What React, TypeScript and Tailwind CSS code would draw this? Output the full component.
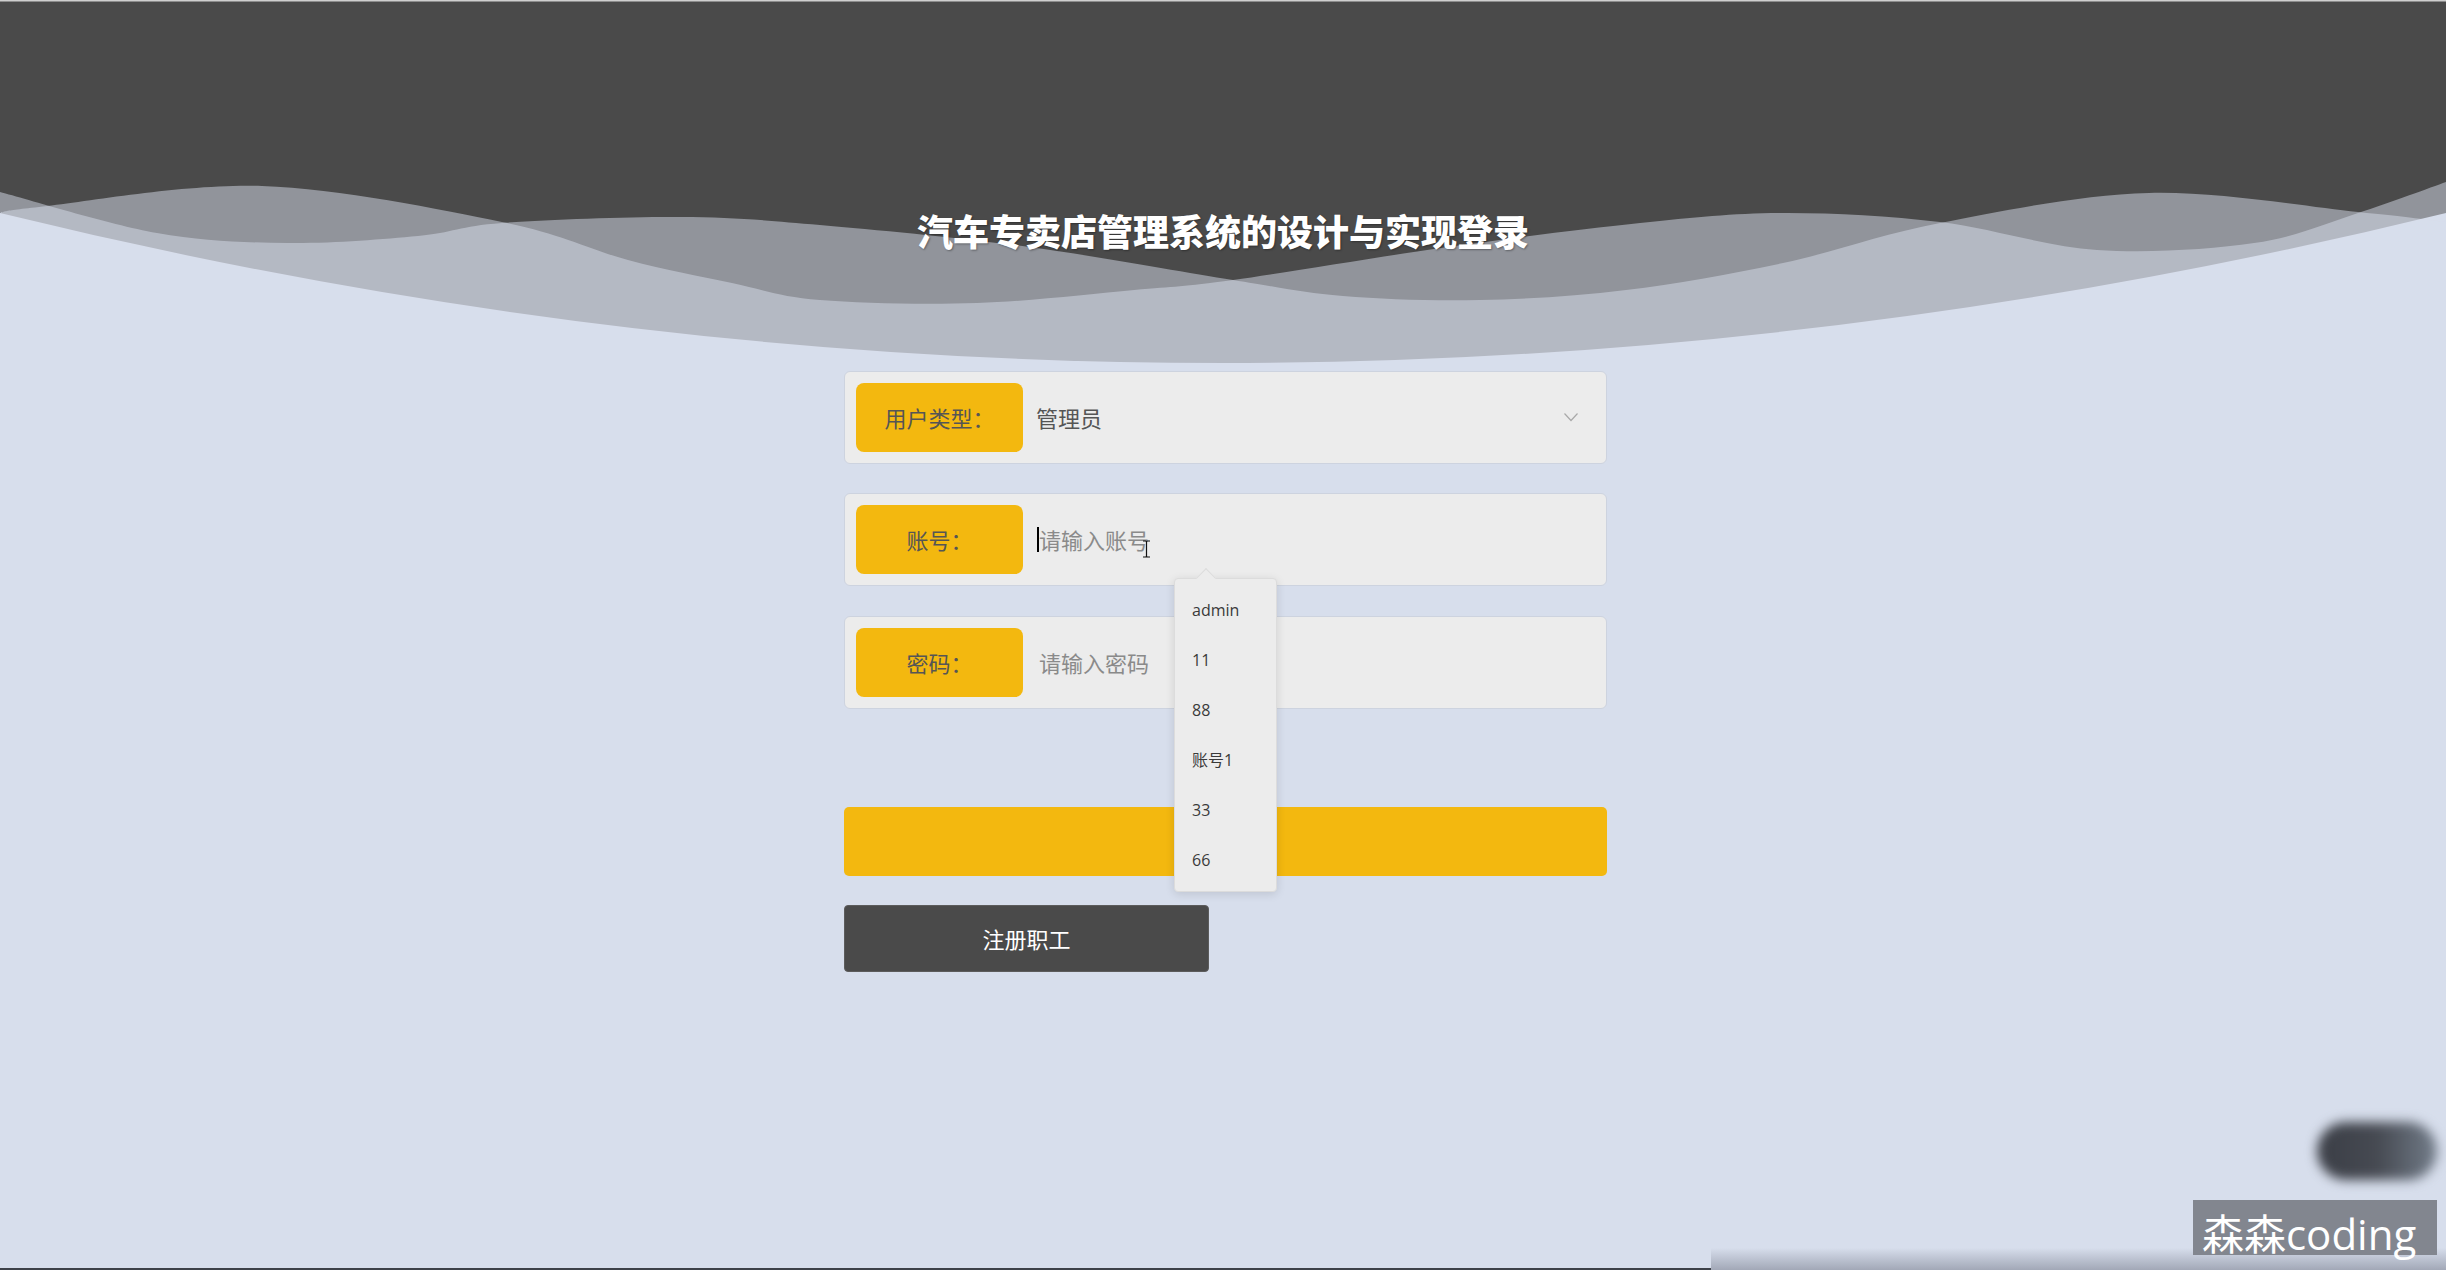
import React from "react";

type P = [number, number];

function smooth(pts: P[]): string {
  let d = `M${pts[0][0]},${pts[0][1]}`;
  for (let i = 0; i < pts.length - 1; i++) {
    const p0 = pts[i - 1] || pts[i];
    const p1 = pts[i];
    const p2 = pts[i + 1];
    const p3 = pts[i + 2] || p2;
    const c1x = p1[0] + (p2[0] - p0[0]) / 6;
    const c1y = p1[1] + (p2[1] - p0[1]) / 6;
    const c2x = p2[0] - (p3[0] - p1[0]) / 6;
    const c2y = p2[1] - (p3[1] - p1[1]) / 6;
    d += ` C${c1x.toFixed(1)},${c1y.toFixed(1)} ${c2x.toFixed(1)},${c2y.toFixed(1)} ${p2[0]},${p2[1]}`;
  }
  return d;
}

const waveX: P[] = [
  [0, 192], [157, 233], [288, 243], [418, 236], [502, 223], [680, 217], [820, 225],
  [1029, 247], [1233, 280], [1343, 296], [1480, 300], [1626, 290], [1783, 263],
  [1940, 223], [2149, 193], [2358, 212], [2446, 222],
];
const waveY: P[] = [
  [0, 213], [39, 207], [262, 186], [502, 222], [628, 260], [732, 283], [820, 300],
  [977, 303], [1134, 290], [1233, 280], [1448, 247], [1640, 223], [1783, 213],
  [1940, 222], [2097, 250], [2254, 243], [2358, 213], [2446, 182],
];

function Waves() {
  return (
    <svg
      className="absolute left-0 top-0 w-full h-[400px]"
      viewBox="0 0 2446 400"
      preserveAspectRatio="none"
    >
      <path d="M0,0 H2446 V213 Q1223,513 0,213 Z" fill="#4a4a4a" />
      <path d={smooth(waveX) + " L2446,400 L0,400 Z"} fill="#d7deec" fillOpacity={0.5} />
      <path d={smooth(waveY) + " L2446,400 L0,400 Z"} fill="#d7deec" fillOpacity={0.5} />
      <rect x="0" y="0" width="2446" height="1.5" fill="#cfcfcf" />
    </svg>
  );
}

function Label({ children }: { children: React.ReactNode }) {
  return (
    <div className="w-[167px] h-[69px] shrink-0 rounded-[8px] bg-[#f3b80f] flex items-center justify-center text-[22px] text-[#555555]">
      {children}
    </div>
  );
}

function Row({ children, className = "" }: { children: React.ReactNode; className?: string }) {
  return (
    <div
      className={
        "relative h-[93px] rounded-[6px] border border-[#cdd3df] bg-[#ececec] p-[11px] flex items-center " +
        className
      }
    >
      {children}
    </div>
  );
}

const items = ["admin", "11", "88", "账号1", "33", "66"];

export default function App() {
  return (
    <div className="relative w-full h-[1270px] overflow-hidden bg-[#d7deec] font-['Noto_Sans_CJK_SC','Noto_Sans',sans-serif]">
      <Waves />

      <div className="relative z-10 flex flex-col">
        <h1 className="pt-[208px] text-center text-[36px] leading-[44px] font-black text-white [text-shadow:1px_1px_2px_rgba(0,0,0,0.35)]">
          汽车专卖店管理系统的设计与实现登录
        </h1>

        <div className="mt-[119px] flex justify-center pl-[5px]">
          <div className="w-[763px] flex flex-col">
            <Row>
              <Label>用户类型：</Label>
              <div className="flex-1 pl-[13px] text-[22px] text-[#555555]">管理员</div>
              <svg width="14" height="9" viewBox="0 0 14 9" className="mr-[17px]">
                <polyline points="0.5,0.5 7,7.5 13.5,0.5" fill="none" stroke="#a9a9a9" strokeWidth="1.2" />
              </svg>
            </Row>

            <Row className="mt-[29px] z-20">
              <Label>账号：</Label>
              <div className="flex-1 pl-[14px] flex items-center">
                <div className="w-[2px] h-[25px] bg-black" />
                <span className="text-[22px] text-[#8a8a8a]">请输入账号</span>
              </div>
              <svg
                width="9"
                height="18"
                viewBox="0 0 9 18"
                className="absolute left-[297px] top-[46px]"
              >
                <path d="M1,1 H3.5 M5.5,1 H8 M4.5,1.5 V16.5 M1,17 H3.5 M5.5,17 H8 M3.5,1 Q4.5,1 4.5,2 M5.5,1 Q4.5,1 4.5,2 M3.5,17 Q4.5,17 4.5,16 M5.5,17 Q4.5,17 4.5,16" fill="none" stroke="#111" strokeWidth="1.2" />
              </svg>

              <div className="absolute left-[329px] top-[84px] w-[103px] h-[314px] rounded-[4px] border border-[#dcdcdc] bg-[#ececec] shadow-[0_2px_10px_rgba(0,0,0,0.12)] py-[6px]">
                <div className="absolute left-[24px] top-[-8px] w-[14px] h-[14px] rotate-45 border-l border-t border-[#dcdcdc] bg-[#ececec]" />
                {items.map((it) => (
                  <div
                    key={it}
                    className="relative h-[50px] pl-[17px] flex items-center text-[16px] text-[#3a3a3a] font-['Open_Sans','Noto_Sans_CJK_SC',sans-serif]"
                  >
                    {it}
                  </div>
                ))}
              </div>
            </Row>

            <Row className="mt-[30px]">
              <Label>密码：</Label>
              <div className="flex-1 pl-[16px] text-[22px] text-[#8a8a8a]">请输入密码</div>
            </Row>

            <button className="mt-[98px] h-[69px] w-full rounded-[5px] bg-[#f3b80f] text-[22px] text-white">
              登录
            </button>

            <button className="mt-[29px] h-[67px] w-[365px] rounded-[4px] border border-[#5c5c5c] bg-[#4a4a4a] text-[22px] text-white">
              注册职工
            </button>
          </div>
        </div>
      </div>

      {/* blurred floating pill */}
      <div className="absolute left-[2317px] top-[1122px] w-[120px] h-[58px] rounded-full bg-gradient-to-r from-[#3b3e46] via-[#464a52] to-[#737d8a] blur-[6px]" />

      {/* bottom strip */}
      <div className="absolute bottom-0 left-0 w-[1711px] h-[2px] bg-[#3d4149]" />
      <div className="absolute bottom-0 left-[1711px] right-0 h-[22px] bg-gradient-to-b from-[#d7deec] to-[#a2a8b7]" />

      {/* watermark */}
      <div className="absolute left-[2193px] top-[1200px] w-[244px] h-[55px] bg-[#82868f] pl-[9px] text-[42px] leading-[67px] text-white font-['Open_Sans','Noto_Sans_CJK_SC',sans-serif] whitespace-nowrap overflow-visible">
        森森coding
      </div>
    </div>
  );
}
